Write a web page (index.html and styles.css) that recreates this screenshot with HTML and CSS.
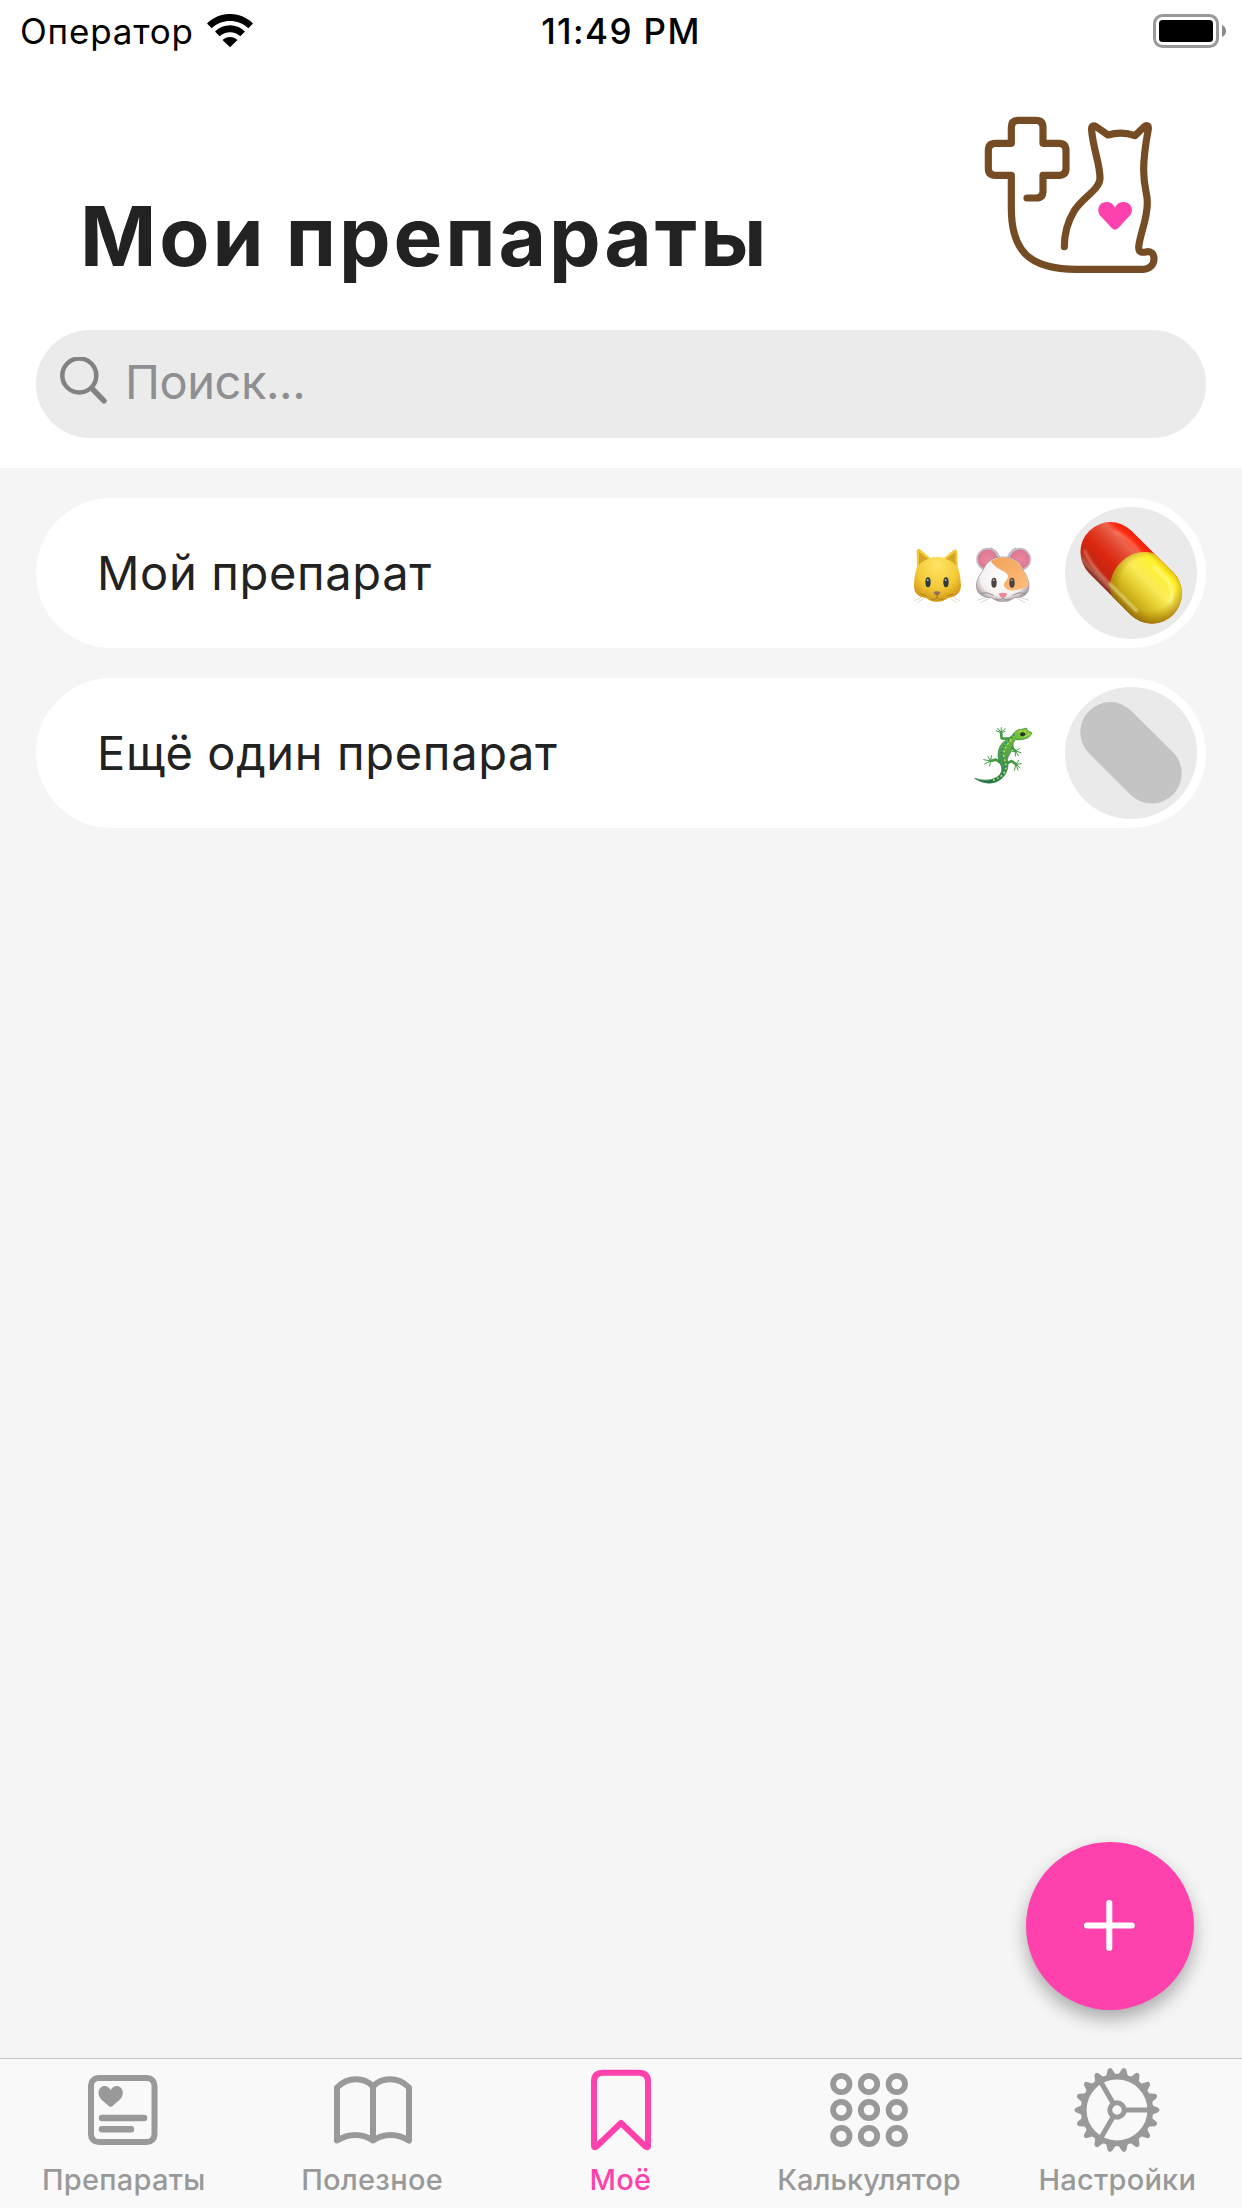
FILE: index.html
```
<!DOCTYPE html>
<html lang="ru">
<head>
<meta charset="utf-8">
<title>Мои препараты</title>
<link rel="stylesheet" href="styles.css">
</head>
<body>
<div class="app">
  <header class="header">
    <div class="status">
      <div class="status-left">
        <span class="carrier">Оператор</span>
        <svg class="wifi" width="46" height="34" viewBox="0 0 46 34">
          <path d="M0 9.5C13-3.2 33-3.2 46 9.5L41.300 14.300C31 4.600 15 4.600 4.700 14.300Z"/>
          <path d="M8 17.500C16.500 9.300 29.500 9.300 38 17.500L33.300 22.300C27.500 16.900 18.500 16.900 12.700 22.300Z"/>
          <path d="M15.500 26C19.800 21.900 26.200 21.900 30.500 26L23 33.300Z"/>
        </svg>
      </div>
      <span class="clock">11:49 PM</span>
      <div class="status-right">
        <svg width="74" height="34" viewBox="0 0 74 34">
          <rect x="1.500" y="1.500" width="63" height="31" rx="8" fill="none" stroke="#999" stroke-width="3"/>
          <rect x="6" y="6" width="54" height="22" rx="3.500"/>
          <path d="M69 11Q73 13 73 17T69 23Z" fill="#888"/>
        </svg>
      </div>
    </div>
    <div class="title-row">
      <h1 class="title">Мои препараты</h1>
      <svg class="logo" width="230" height="190" viewBox="0 0 690 570">
        <path fill="none" stroke="#754c24" stroke-width="21.500" stroke-linecap="round" stroke-linejoin="round" d="M201 294H228Q249 294 249 273V226H297Q318 226 318 205V152Q318 130 297 130H249V83Q249 61 228 61H175Q154 61 154 83V130H106Q85 130 85 152V205Q85 226 106 226H154V325C154 450 205 508 350 508H550C568 508 582 494 582 476C582 461 573 453 561 455C548 458 536 460 536 441C540 400 562 360 562 308C562 275 551 265 551 210C551 160 559 120 565 87C566 76 560 74 552 81L525 107C498 97 470 97 444 105L408 80C398 74 393 79 395 92C400 150 420 190 420 235C420 268 368 292 343 332C326 360 313 400 313 440"/>
        <path fill="#ff41ad" d="M465 323C456 302 431 302 420 314C412 325 414 339 421 347L455 384Q465 395 475 384L509 347C517 339 519 325 510 314C499 302 474 302 465 323Z"/>
      </svg>
    </div>
    <div class="search">
      <svg width="48" height="48" viewBox="0 0 48 48" fill="none" stroke="#828285" stroke-linecap="round">
        <circle cx="20.300" cy="18.500" r="17" stroke-width="4.500"/>
        <path d="M33 31.500L45 43.800" stroke-width="5.500"/>
      </svg>
      <span>Поиск...</span>
    </div>
  </header>

  <main class="list">
    <article class="card">
      <span class="name">Мой препарат</span>
      <svg class="animals" width="160" height="90" viewBox="0 -6 480 270">
        <defs>
          <radialGradient id="cat" cx=".5" cy=".3" r=".75"><stop offset="0" stop-color="#ffe565"/><stop offset=".6" stop-color="#f4c936"/><stop offset="1" stop-color="#c98e12"/></radialGradient>
          <radialGradient id="ear" cx=".5" cy=".5" r=".55"><stop offset="0" stop-color="#ec87a2"/><stop offset=".75" stop-color="#df7893"/><stop offset="1" stop-color="#a66f84"/></radialGradient>
          <radialGradient id="fur" cx=".5" cy=".45" r=".6"><stop offset="0" stop-color="#fff"/><stop offset=".7" stop-color="#f5f1f1"/><stop offset="1" stop-color="#9a8c90"/></radialGradient>
          <linearGradient id="patch" y2="1"><stop offset="0" stop-color="#f3a35a"/><stop offset="1" stop-color="#ffbd7a"/></linearGradient>
        </defs>
        <path fill="url(#cat)" d="M83 58Q87 55 94 61L121 83Q141 79 162 83L190 61Q200 54 202 66L203 108Q212 137 213 165C213 190 196 202 174 204Q153 218 141 215Q129 218 108 204C86 202 71 190 72 165Q72 137 81 110L80 67Q80 60 83 58Z"/>
        <path fill="#c58f18" opacity=".65" d="M87 66L116 86Q94 94 86 106ZM196 66L167 86Q189 94 197 106Z"/>
        <g fill="#303941"><ellipse cx="114" cy="157" rx="8" ry="15"/><ellipse cx="168" cy="157" rx="8" ry="15"/></g>
        <g fill="#aab6bb"><circle cx="113" cy="150" r="3"/><circle cx="167" cy="150" r="3"/></g>
        <path fill="#93705c" d="M131 186Q141 181 151 186Q151 193 141 198Q131 193 131 186Z"/>
        <path fill="none" stroke="#a8791b" stroke-width="2.500" d="M141 196V204Q133 211 122 207M141 204Q149 211 160 207M92 192L110 197M190 192L172 197"/>
        <path fill="none" stroke="#c4b28b" stroke-width="1.500" d="M93 202L73 213M100 206L82 218M190 202L210 213M182 206L200 218"/>

        <g stroke="#c9bcc9" stroke-width="5"><circle cx="293" cy="88" r="32" fill="url(#ear)"/><circle cx="389" cy="88" r="32" fill="url(#ear)"/></g>
        <path fill="none" stroke="#aab" stroke-width="3" d="M300 53Q324 62 329 82M379 53Q358 62 353 82"/>
        <path fill="url(#fur)" stroke="#978c91" stroke-width="2" d="M339 81C369 80 391 96 399 119C412 139 419 157 416 177C412 197 393 204 374 203Q354 217 339 214Q324 217 304 203C285 204 263 195 260 175C256 155 267 138 280 119C288 96 309 80 339 81Z"/>
        <path fill="url(#patch)" d="M302 93C331 74 381 79 398 119Q414 143 415 164Q411 174 393 176C374 184 353 184 344 172C335 160 355 150 354 139C351 120 325 126 302 93Z"/>
        <g fill="#4a4140"><ellipse cx="312" cy="158" rx="8" ry="15"/><ellipse cx="366" cy="158" rx="8" ry="15"/></g>
        <g fill="#b8a7a0"><circle cx="311" cy="151" r="3"/><circle cx="365" cy="151" r="3"/></g>
        <path fill="#ed8593" d="M326 191Q339 185 352 191Q349 201 339 204Q329 201 326 191Z"/>
        <path fill="none" stroke="#8c8586" stroke-width="2.500" d="M273 190Q293 184 311 196M405 190Q385 184 367 196M317 207Q331 214 339 205Q347 214 361 207"/>
        <path fill="none" stroke="#b5b0b0" stroke-width="1.500" d="M290 202L261 211M296 206L271 218M388 202L417 211M382 206L407 218"/>
      </svg>
      <div class="thumb">
        <svg width="132" height="132" viewBox="15 21 396 396">
          <defs>
            <linearGradient id="red" x2="0" y2="1"><stop offset="0" stop-color="#f51d08"/><stop offset=".14" stop-color="#ff3115"/><stop offset=".22" stop-color="#ed654e"/><stop offset=".4" stop-color="#e2432c"/><stop offset=".6" stop-color="#dc2710"/><stop offset=".84" stop-color="#c42510"/><stop offset=".93" stop-color="#ad5a49"/><stop offset="1" stop-color="#852216"/></linearGradient>
            <linearGradient id="yellow" x2="0" y2="1"><stop offset="0" stop-color="#e6c80c"/><stop offset=".1" stop-color="#fff12b"/><stop offset=".4" stop-color="#fbec58"/><stop offset=".6" stop-color="#e5cf32"/><stop offset=".82" stop-color="#c9aa18"/><stop offset="1" stop-color="#967309"/></linearGradient>
            <radialGradient id="tip" gradientUnits="userSpaceOnUse" cx="60" cy="-12" r="122"><stop offset=".66" stop-color="#a87903" stop-opacity="0"/><stop offset="1" stop-color="#936600" stop-opacity=".75"/></radialGradient>
            <filter id="soft" x="-20%" y="-100%" width="140%" height="300%"><feGaussianBlur stdDeviation="2.500"/></filter>
          </defs>
          <g transform="translate(213.500 218.500) rotate(45)">
            <rect x="-178" y="-90" width="356" height="180" rx="90" fill="url(#red)"/>
            <path d="M10-90H88A90 90 0 0 1 88 90H10C-62 58-62-58 10-90Z" fill="url(#yellow)"/>
            <path d="M10-90H88A90 90 0 0 1 88 90H10C-62 58-62-58 10-90Z" fill="url(#tip)"/>
            <g fill="none" stroke-linecap="round" filter="url(#soft)">
              <path d="M-145 52Q-110 68-35 70" stroke="#f0aa9c" stroke-width="6" opacity=".65"/>
              <path d="M-25 69H92" stroke="#fff9a5" stroke-width="7" opacity=".8"/>
              <path d="M-120-55Q-75-70-18-61" stroke="#ffb09f" stroke-width="10" opacity=".4"/>
              <path d="M35-62H92Q130-55 145-20" stroke="#fffdb0" stroke-width="9" opacity=".6"/>
            </g>
          </g>
        </svg>
      </div>
    </article>

    <article class="card">
      <span class="name">Ещё один препарат</span>
      <svg class="animals" width="100" height="90" viewBox="0 -6 300 270">
        <defs><linearGradient id="liz" x1=".8" x2=".3" y2="1"><stop offset="0" stop-color="#82cb35"/><stop offset=".5" stop-color="#4fa34c"/><stop offset="1" stop-color="#237349"/></linearGradient></defs>
        <g fill="none" stroke="#469b42" stroke-linecap="round" stroke-linejoin="round">
          <path stroke-width="8" d="M180 86L155 85L153 67M184 96L188 115L196 123M155 160L138 149L122 153M170 160L185 153L198 163"/>
          <path stroke-width="3" d="M153 67L139 63M153 67L143 55M153 67L154 53M153 67L166 56M153 67L165 65M196 123L186 125M196 123L196 138M196 123L205 137M196 123L213 128M196 123L208 116M122 153L101 149M122 153L104 162M122 153L114 140M122 153L124 137M122 153L119 168M198 163L213 161M198 163L210 173M198 163L204 180M198 163L193 181M198 163L206 151"/>
        </g>
        <path fill="url(#liz)" stroke="#328247" stroke-width="2" d="M190 72Q198 57 215 58L229 54L233 62L246 68Q243 77 233 84Q213 92 196 89Q189 96 187 110C185 128 174 136 172 149C180 174 165 202 144 213C119 226 91 217 74 205Q101 214 123 209C149 202 159 187 154 168C143 152 140 128 151 107C161 91 177 87 190 72Z"/>
        <path fill="none" stroke="#167e7b" stroke-width="5" stroke-dasharray="4 7" d="M193 73C178 90 158 105 155 125C153 143 165 153 165 172C164 190 148 207 125 212"/>
        <path fill="none" stroke="#c7d548" stroke-width="5" stroke-dasharray="6 7" d="M184 89C168 106 161 120 161 137C164 156 174 173 161 190Q148 207 123 213M209 63L234 67"/>
        <ellipse cx="218" cy="73" rx="8" ry="6" fill="#26352a"/><path d="M222 80L242 71" stroke="#b9dc4e" stroke-width="3"/>
      </svg>
      <div class="thumb">
        <svg width="132" height="132" viewBox="15 21 396 396"><rect x="-178" y="-90" width="356" height="180" rx="90" fill="#c4c4c4" transform="translate(213 218.500) rotate(45)"/></svg>
      </div>
    </article>
  </main>

  <button class="fab" aria-label="Добавить">
    <svg width="52" height="52" viewBox="0 0 52 52"><path d="M25.300 3V48M2.800 25.500H47.800" fill="none" stroke="#fff" stroke-width="6" stroke-linecap="round"/></svg>
  </button>

  <nav class="tabs">
    <a class="tab">
      <svg width="90" height="90" viewBox="79 2065 90 90">
        <rect x="91" y="2078" width="63.500" height="64" rx="7.500" fill="none" stroke="#999" stroke-width="6"/>
        <path fill="#999" d="M110.700 2090C107 2083.500 99 2085.500 98.500 2092.500C98.500 2099 104 2101.500 109 2106.200Q110.700 2107.500 112.400 2106.200C117 2101.500 123 2099 122.800 2092.500C122.500 2085.500 114 2083.500 110.700 2090Z"/>
        <path stroke="#999" stroke-width="6.500" stroke-linecap="round" d="M102 2118H144M102 2129.200H131"/>
      </svg>
      <span>Препараты</span>
    </a>
    <a class="tab">
      <svg width="90" height="90" viewBox="327.500 2065 90 90">
        <path fill="none" stroke="#999" stroke-width="6" stroke-linecap="round" stroke-linejoin="round" d="M372.500 2086.500C364 2077.500 348 2076 336.500 2087.500V2140.500C348 2133 362 2133 372.500 2140.500C383 2133 397 2133 408.500 2140.500V2087.500C397 2076 381 2077.500 372.500 2086.500V2140.500"/>
      </svg>
      <span>Полезное</span>
    </a>
    <a class="tab active">
      <svg width="90" height="90" viewBox="576 2065 90 90">
        <path fill="none" stroke="#ff41ad" stroke-width="6" stroke-linejoin="round" d="M603 2072.800H639Q648 2072.800 648 2081.800V2145.500Q648 2148.500 645.500 2146.500L621 2123L596.500 2146.500Q594 2148.500 594 2145.500V2081.800Q594 2072.800 603 2072.800Z"/>
      </svg>
      <span>Моё</span>
    </a>
    <a class="tab">
      <svg width="90" height="90" viewBox="824.200 2065 90 90">
        <g fill="none" stroke="#999" stroke-width="5.800">
          <circle cx="841.500" cy="2084" r="8.200"/><circle cx="869.200" cy="2084" r="8.200"/><circle cx="897" cy="2084" r="8.200"/>
          <circle cx="841.500" cy="2110" r="8.200"/><circle cx="869.200" cy="2110" r="8.200"/><circle cx="897" cy="2110" r="8.200"/>
          <circle cx="841.500" cy="2136" r="8.200"/><circle cx="869.200" cy="2136" r="8.200"/><circle cx="897" cy="2136" r="8.200"/>
        </g>
      </svg>
      <span class="wide">Калькулятор</span>
    </a>
    <a class="tab">
      <svg width="90" height="90" viewBox="-44 -45 90 90">
        <defs><path id="tooth" fill="#999" d="M34-5.500L37-4L41-2.300Q42.500-1.500 42.500 0T41 2.300L37 4L34 5.500Z"/></defs>
        <g fill="none" stroke="#999">
          <circle r="33.300" stroke-width="5.800"/>
          <circle r="7.200" stroke-width="5"/>
          <path stroke-width="5" d="M8 0H32M-4-6.930L-16-27.700M-4 6.930L-16 27.700"/>
        </g>
        <use href="#tooth"/><use href="#tooth" transform="rotate(20)"/><use href="#tooth" transform="rotate(40)"/>
        <use href="#tooth" transform="rotate(60)"/><use href="#tooth" transform="rotate(80)"/><use href="#tooth" transform="rotate(100)"/>
        <use href="#tooth" transform="rotate(120)"/><use href="#tooth" transform="rotate(140)"/><use href="#tooth" transform="rotate(160)"/>
        <use href="#tooth" transform="rotate(180)"/><use href="#tooth" transform="rotate(200)"/><use href="#tooth" transform="rotate(220)"/>
        <use href="#tooth" transform="rotate(240)"/><use href="#tooth" transform="rotate(260)"/><use href="#tooth" transform="rotate(280)"/>
        <use href="#tooth" transform="rotate(300)"/><use href="#tooth" transform="rotate(320)"/><use href="#tooth" transform="rotate(340)"/>
      </svg>
      <span>Настройки</span>
    </a>
  </nav>
</div>
</body>
</html>
```
FILE: styles.css
```
* { box-sizing: border-box; }

body {
  margin: 0;
  font-family: Inter, "Liberation Sans", sans-serif;
  color: #222;
  background: #f5f5f5;
}

svg { display: block; flex: none; }

.app {
  position: relative;
  display: flex;
  flex-direction: column;
  height: 2208px;
}

.header {
  height: 468px;
  padding: 0 36px;
  background: #fff;
}

.status {
  display: grid;
  grid-template-columns: 1fr auto 1fr;
  align-items: center;
  height: 60px;
  margin: 0 -16px;
  color: #000;
  font-size: 35px;
  line-height: 62px;
}

.status-left {
  display: flex;
  align-items: center;
  gap: 13px;
}

.wifi { margin-bottom: 1px; }
.carrier { letter-spacing: 0.8px; }
.clock { font-weight: 550; letter-spacing: 1.4px; }

.status-right {
  display: flex;
  justify-content: flex-end;
  margin-right: -5px;
}

/* keeps the battery on the clock's line */
.status-right svg { margin-bottom: 1px; }

.title-row {
  display: flex;
  justify-content: space-between;
  height: 270px;
  padding: 40px 16px 0 44px;
}

.title {
  margin: 87px 0 0;
  font-size: 82px;
  line-height: 100px;
  font-weight: 700;
  letter-spacing: 2.9px;
  word-spacing: -3px;
  white-space: nowrap;
}

.search {
  display: flex;
  align-items: center;
  gap: 18px;
  height: 108px;
  padding: 0 23px 6px;
  border-radius: 54px;
  background: #ebebeb;
  color: #8e8e93;
  font-size: 47px;
  letter-spacing: -0.45px;
}

.list {
  display: flex;
  flex: 1;
  flex-direction: column;
  gap: 30px;
  padding: 30px 36px;
}

.card {
  display: flex;
  align-items: center;
  height: 150px;
  padding: 0 9px 0 61px;
  border-radius: 75px;
  background: #fff;
}

.name {
  flex: 1;
  padding-bottom: 2px;
  font-size: 47px;
  letter-spacing: 0.65px;
}

.animals { margin-right: 15px; }

.thumb {
  width: 132px;
  height: 132px;
  border-radius: 50%;
  background: #eaeaea;
}

.fab {
  position: absolute;
  right: 48px;
  bottom: 198px;
  display: flex;
  align-items: center;
  justify-content: center;
  width: 168px;
  height: 168px;
  padding: 0;
  border: 0;
  border-radius: 50%;
  background: #ff41ad;
  box-shadow: 0 9px 18px rgba(0, 0, 0, 0.3);
}

.tabs {
  display: grid;
  grid-template-columns: repeat(5, 1fr);
  height: 150px;
  border-top: 1px solid #c4c4c4;
  background: #f9f9f9;
}

.tab {
  display: flex;
  flex-direction: column;
  align-items: center;
  padding-top: 6px;
  color: #999;
  font-size: 29px;
  font-weight: 500;
  line-height: 36px;
  letter-spacing: 0.25px;
}

.tab span { margin: 7px 1px 0 0; }
.tab .wide { letter-spacing: 0; }
.tab.active { color: #ff41ad; }
```
